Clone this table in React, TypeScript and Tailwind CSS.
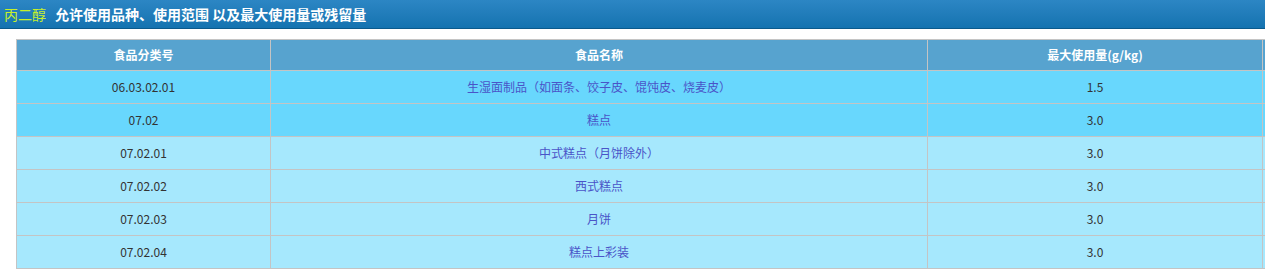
import React from "react";

const rows = [
  { code: "06.03.02.01", name: "生湿面制品（如面条、饺子皮、馄饨皮、烧麦皮）", v: "1.5", dark: true },
  { code: "07.02", name: "糕点", v: "3.0", dark: true },
  { code: "07.02.01", name: "中式糕点（月饼除外）", v: "3.0", dark: false },
  { code: "07.02.02", name: "西式糕点", v: "3.0", dark: false },
  { code: "07.02.03", name: "月饼", v: "3.0", dark: false },
  { code: "07.02.04", name: "糕点上彩装", v: "3.0", dark: false },
];

const font = { fontFamily: '"Microsoft YaHei","Noto Sans CJK SC",sans-serif' };

export default function App() {
  return (
    <div className="w-[1265px] h-[269px] overflow-hidden bg-white" style={font}>
      <div className="h-[29px] bg-gradient-to-b from-[#2c86c4] to-[#1473b0] border-b border-[#0b5a8c] flex items-center pl-[4px]">
        <span className="text-[14px] text-[#c6f02a] leading-none">丙二醇</span>
        <span className="text-[14px] text-white font-bold ml-[9px] leading-none">允许使用品种、使用范围 以及最大使用量或残留量</span>
      </div>
      <div className="pt-[10px] pl-[16px]">
        <table className="border-collapse text-[12px] w-[1400px] table-fixed">
          <colgroup>
            <col className="w-[254px]" />
            <col className="w-[657px]" />
            <col className="w-[335px]" />
            <col className="w-[154px]" />
          </colgroup>
          <thead>
            <tr className="h-[31px] bg-[#57a3cf] text-white font-bold">
              <th className="border border-[#c4c4c4] font-bold">食品分类号</th>
              <th className="border border-[#c4c4c4] font-bold">食品名称</th>
              <th className="border border-[#c4c4c4] font-bold">最大使用量(g/kg)</th>
              <th className="border border-[#c4c4c4] font-bold"></th>
            </tr>
          </thead>
          <tbody>
            {rows.map((r) => (
              <tr key={r.code} className={"h-[33px] " + (r.dark ? "bg-[#68d7fd]" : "bg-[#a6e8fd]")}>
                <td className="border border-[#c4c4c4] text-center text-[#333333] pb-[1px]">{r.code}</td>
                <td className="border border-[#c4c4c4] text-center text-[#4a54c8] pb-[1px]">{r.name}</td>
                <td className="border border-[#c4c4c4] text-center text-[#333333] pb-[1px]">{r.v}</td>
                <td className="border border-[#c4c4c4]"></td>
              </tr>
            ))}
          </tbody>
        </table>
      </div>
    </div>
  );
}
